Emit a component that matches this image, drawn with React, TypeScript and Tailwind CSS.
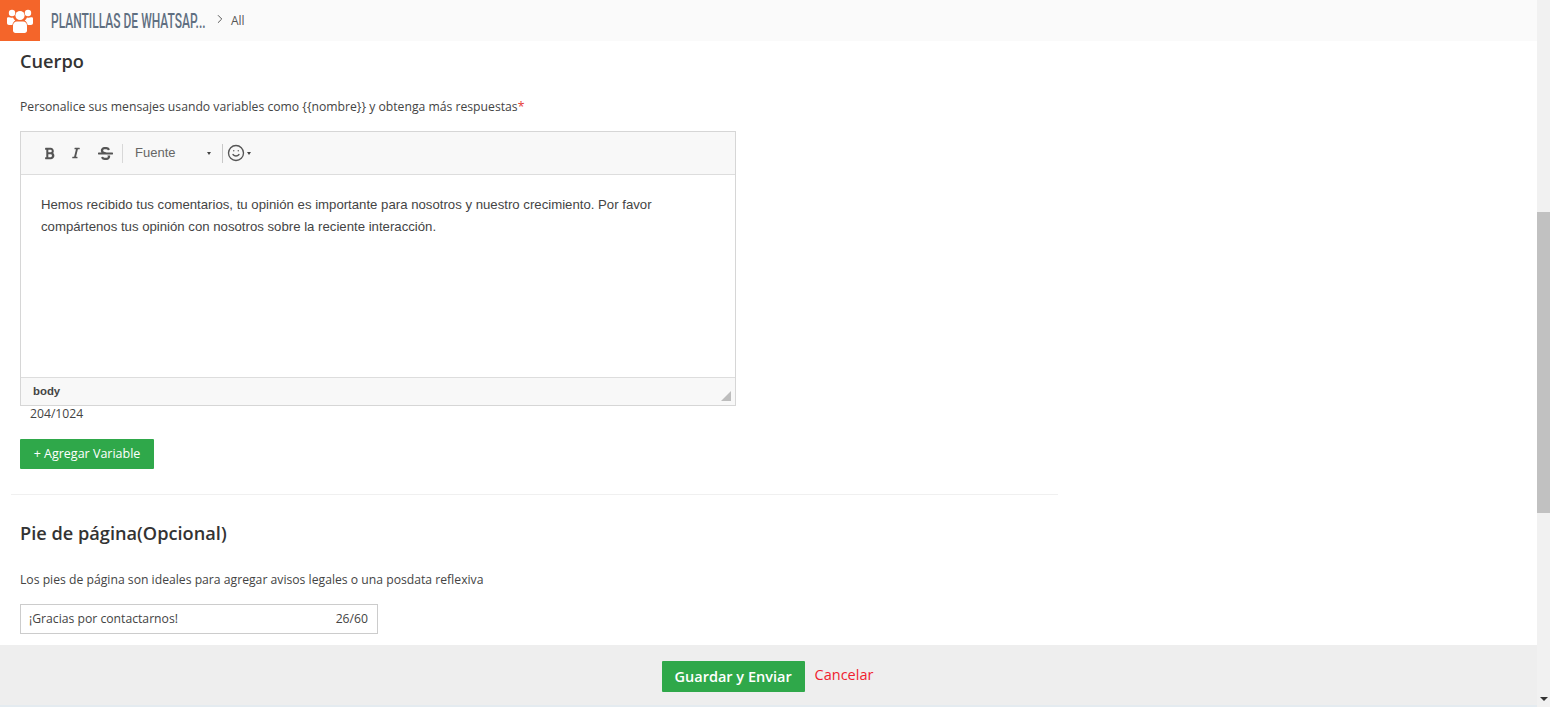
import { ChevronRight, Smile } from 'lucide-react'
import { FaBold, FaItalic, FaStrikethrough } from 'react-icons/fa'

function TeamIcon() {
  return (
    <svg width="28" height="26" viewBox="0 0 28 26" fill="#fff">
      <circle cx="6" cy="5" r="3.2" />
      <circle cx="22" cy="5" r="3.2" />
      <circle cx="14" cy="7.5" r="4.6" />
      <path d="M1 10.500c0-1 1-1.600 2-1.200 1.400.5 2.800.5 4 .2.500 1.200 1.300 2.200 2.300 2.900C7.700 13.400 6.600 15 6.300 17H3c-1.200 0-2-.8-2-2z" />
      <path d="M27 10.500c0-1-1-1.600-2-1.200-1.400.5-2.800.5-4 .2-.5 1.200-1.300 2.200-2.300 2.900 1.600 1 2.700 2.600 3 4.600H25c1.200 0 2-.8 2-2z" />
      <path d="M11 13.500h6c2.500 0 4 1.800 4 4v5c0 1.500-1 2.500-2.500 2.500h-9C8 25 7 24 7 22.500v-5c0-2.200 1.500-4 4-4z" />
    </svg>
  )
}

function Toolbar() {
  return (
    <div className="h-[43px] bg-[#f8f8f8] border-b border-[#dddddd] flex items-center pl-[22px] text-[#555555]">
      <FaBold size={13} />
      <FaItalic size={12} className="ml-[14px]" />
      <FaStrikethrough size={15} className="ml-[16px]" />
      <div className="w-px h-[19px] bg-[#d8d8d8] ml-[9px]" />
      <span className="ml-[12px] w-[72px] -mt-px text-[13px] text-[#666666] font-['Liberation_Sans',sans-serif]">Fuente</span>
      <span className="w-0 h-0 border-x-[2px] border-x-transparent border-t-[3px] border-t-[#444444]" />
      <div className="w-px h-[19px] bg-[#c8c8c8] ml-[11px]" />
      <Smile size={18} strokeWidth={1.8} className="ml-[4px]" />
      <span className="ml-[2px] w-0 h-0 border-x-[2px] border-x-transparent border-t-[3px] border-t-[#444444]" />
    </div>
  )
}

function Editor() {
  return (
    <div className="w-[716px] border border-[#d6d6d6] bg-white">
      <Toolbar />
      <div className="h-[202px] px-5 pt-[19px] text-[13.2px] leading-[22px] text-[#444444] font-['Liberation_Sans',sans-serif]">
        <p>Hemos recibido tus comentarios, tu opinión es importante para nosotros y nuestro crecimiento. Por favor</p>
        <p>compártenos tus opinión con nosotros sobre la reciente interacción.</p>
      </div>
      <div className="relative h-[28px] bg-[#f8f8f8] border-t border-[#dddddd] pl-3 flex items-center text-[11.4px] font-bold text-[#444444] font-['Liberation_Sans',sans-serif]">
        body
        <span className="absolute right-[4px] bottom-[4px] w-0 h-0 border-l-[10px] border-l-transparent border-b-[10px] border-b-[#bdbdbd]" />
      </div>
    </div>
  )
}

export default function App() {
  return (
    <div className="h-[707px] w-[1550px] flex overflow-hidden bg-white font-['Open_Sans',sans-serif] text-[#444444]">
      <div className="flex-1 flex flex-col min-w-0">
        {/* header */}
        <header className="h-[41px] shrink-0 bg-[#fafafa] flex items-center">
          <div className="w-10 h-[41px] bg-[#f4652a] flex items-center justify-center">
            <TeamIcon />
          </div>
          <div className="w-[162px] ml-[11px]">
            <span className="inline-block origin-left scale-x-[0.6] whitespace-nowrap text-[20px] font-medium font-['Roboto',sans-serif] text-[#5f6f81]">
              PLANTILLAS DE WHATSAP...
            </span>
          </div>
          <ChevronRight size={14} strokeWidth={1.5} className="text-[#444444] -mt-[3px]" />
          <span className="ml-[4px] text-[12px] text-[#555555]">All</span>
        </header>

        {/* form */}
        <main className="flex-1 min-h-0 overflow-hidden pl-5 pt-[6px]">
          <h2 className="text-[18.2px] leading-[28px] font-semibold text-[#333333]">Cuerpo</h2>
          <p className="mt-[23px] text-[12.2px] leading-[18px] text-[#444444]">
            Personalice sus mensajes usando variables como {'{{nombre}}'} y obtenga más respuestas<span className="text-[#e53935]">*</span>
          </p>
          <div className="mt-[15px]">
            <Editor />
          </div>
          <div className="ml-[10px] -mt-px text-[12.2px] leading-[18px]">204/1024</div>
          <button className="mt-[16px] h-[30px] w-[134px] bg-[#2fa84a] text-white text-[12.5px] rounded-[1px]">+ Agregar Variable</button>
          <div className="-ml-[9px] mt-[25px] w-[1047px] border-t border-[#f0f0f0]" />
          <h2 className="mt-[24px] text-[18.2px] leading-[28px] font-semibold text-[#333333]">Pie de página(Opcional)</h2>
          <p className="mt-[24px] text-[12.2px] leading-[18px]">Los pies de página son ideales para agregar avisos legales o una posdata reflexiva</p>
          <div className="mt-[15px] w-[358px] h-[30px] border border-[#cccccc] flex items-center justify-between pl-2 pr-[9px] text-[12.2px]">
            <span>¡Gracias por contactarnos!</span>
            <span>26/60</span>
          </div>
        </main>

        {/* action bar */}
        <footer className="h-[62px] shrink-0 flex flex-col">
          <div className="flex-1 bg-[#eeeeee] flex items-center justify-center pr-[2px] pt-[3px]">
            <button className="w-[143px] h-[31px] bg-[#2fa84a] text-white text-[14.5px] font-semibold rounded-[1px]">Guardar y Enviar</button>
            <span className="ml-[10px] text-[14.5px] text-[#f0212e] -mt-[3px]">Cancelar</span>
          </div>
          <div className="h-[2px] bg-[#e4ebf0]" />
        </footer>
      </div>

      {/* scrollbar */}
      <div className="w-[13px] shrink-0 bg-[#f1f1f1] flex flex-col items-center">
        <div className="h-[212px]" />
        <div className="h-[301px] w-full bg-[#c1c1c1]" />
        <span className="mt-auto mb-[6px] w-0 h-0 border-x-[4px] border-x-transparent border-t-[4px] border-t-[#333333]" />
      </div>
    </div>
  )
}
